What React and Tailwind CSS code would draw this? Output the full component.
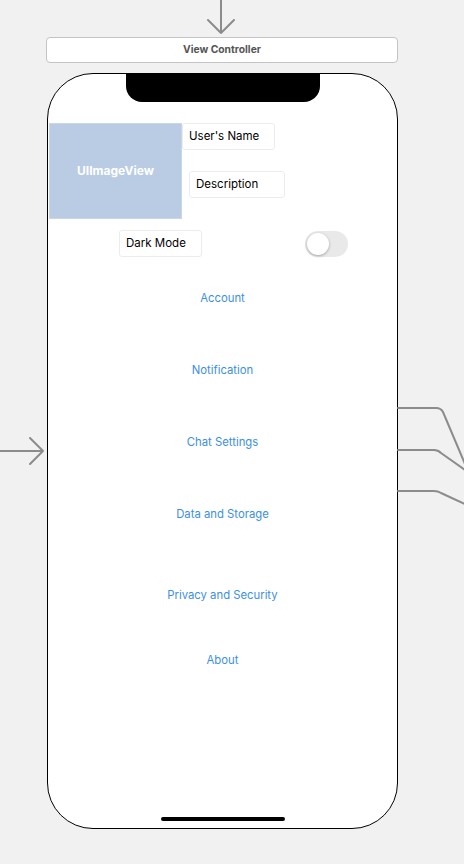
import React from "react";

const font = { fontFamily: "Inter, 'Liberation Sans', sans-serif" };

const Field = ({ children, className = "" }) => (
  <div
    className={`h-[27px] flex items-center pl-[6px] bg-white border border-[#ececec] rounded-[3px] text-[11.5px] text-black ${className}`}
  >
    {children}
  </div>
);

const links = [
  { label: "Account", mt: "mt-[31px]" },
  { label: "Notification", mt: "mt-[52px]" },
  { label: "Chat Settings", mt: "mt-[52px]" },
  { label: "Data and Storage", mt: "mt-[52px]" },
  { label: "Privacy and Security", mt: "mt-[61px]" },
  { label: "About", mt: "mt-[45px]" },
];

export default function App() {
  return (
    <div className="relative w-[464px] h-[864px] bg-[#f1f1f1] overflow-hidden" style={font}>
      <div className="pt-[37px] pl-[46px]">
        {/* Scene header */}
        <div className="w-[352px] h-[26px] bg-white border border-[#c4c4c4] rounded-[4px] flex items-center justify-center text-[10.3px] font-bold text-[#555]">
          View Controller
        </div>

        {/* Phone frame */}
        <div className="mt-[10px] ml-[1px] w-[351px] h-[756px] bg-white border-[1.5px] border-black rounded-[46px] overflow-hidden flex flex-col">
          <div className="mx-auto w-[194px] h-[28px] bg-black rounded-b-[16px] shrink-0" />

          {/* Profile */}
          <div className="mt-[21px] flex">
            <div className="ml-[1px] w-[133px] h-[96px] bg-[#b9cce4] border border-[#c9d6e6] flex items-center justify-center text-white font-bold text-[12px]">
              UIImageView
            </div>
            <div className="flex flex-col">
              <Field className="w-[93px]">User's Name</Field>
              <Field className="mt-[21px] ml-[7px] w-[96px]">Description</Field>
            </div>
          </div>

          {/* Dark mode */}
          <div className="mt-[11px] flex items-center">
            <Field className="ml-[71px] w-[83px]">Dark Mode</Field>
            <div className="ml-[103px] w-[43px] h-[26px] rounded-full bg-[#e9e9ea] p-[2px] flex items-center">
              <div className="w-[22px] h-[22px] rounded-full bg-white shadow-[0_1px_3px_rgba(0,0,0,0.3)]" />
            </div>
          </div>

          {/* Menu */}
          <div className="flex flex-col items-center">
            {links.map((l) => (
              <div key={l.label} className={`${l.mt} h-[20px] flex items-center text-[11.3px] text-[#3b8fe6]`}>
                {l.label}
              </div>
            ))}
          </div>

          <div className="mt-auto mb-[7px] mx-auto w-[124px] h-[4px] rounded-full bg-black" />
        </div>
      </div>

      {/* Segues */}
      <svg className="absolute inset-0 pointer-events-none" width="464" height="864" fill="none" stroke="#8c8c8c" strokeWidth="2" strokeLinecap="round" strokeLinejoin="round">
        <path d="M221 0 V33 M208 20 L221 33 L234 20" />
        <path d="M0 451 H43 M30 438 L43 451 L30 464" />
        <path d="M398 408 H436 Q441 408 443 412 L465 464" />
        <path d="M398 450 H434 Q438 450 441 453 L465 470" />
        <path d="M398 491 H434 Q438 491 441 493 L465 504" />
      </svg>
    </div>
  );
}
